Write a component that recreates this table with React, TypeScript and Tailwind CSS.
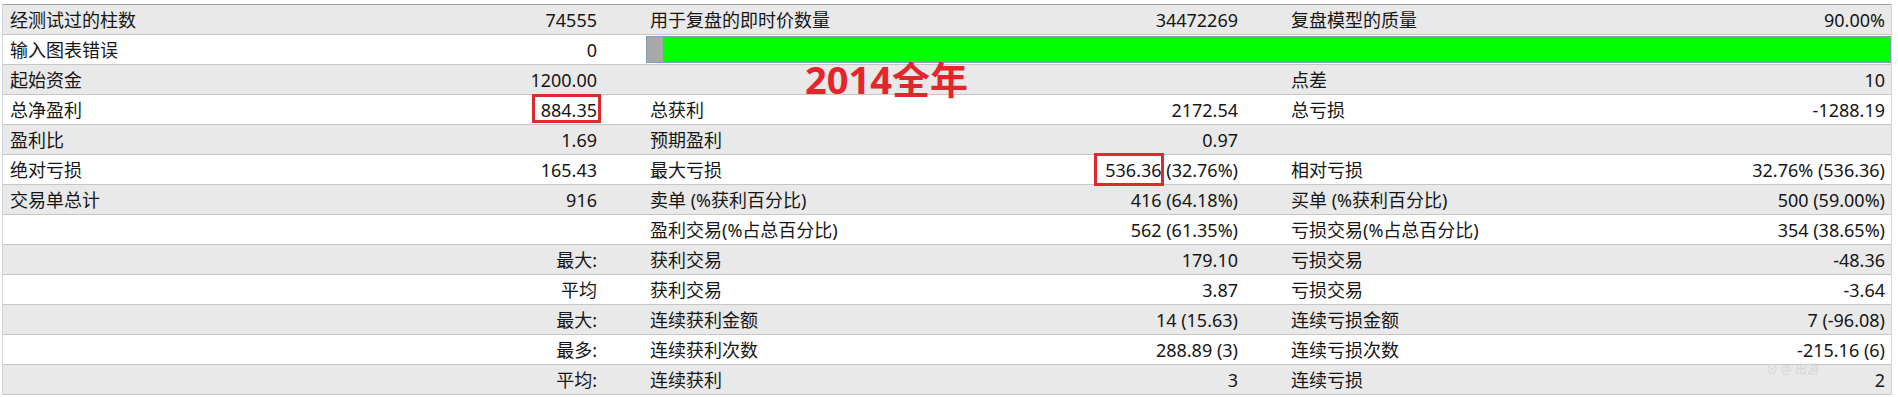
import React from 'react';

type Row = {
  a?: string;
  av?: string;
  b?: string;
  bv?: React.ReactNode;
  c?: string;
  cv?: string;
  bar?: boolean;
};

const rows: Row[] = [
  { a: '经测试过的柱数', av: '74555', b: '用于复盘的即时价数量', bv: '34472269', c: '复盘模型的质量', cv: '90.00%' },
  { a: '输入图表错误', av: '0', bar: true },
  { a: '起始资金', av: '1200.00', c: '点差', cv: '10' },
  { a: '总净盈利', av: '884.35', b: '总获利', bv: '2172.54', c: '总亏损', cv: '-1288.19' },
  { a: '盈利比', av: '1.69', b: '预期盈利', bv: '0.97' },
  { a: '绝对亏损', av: '165.43', b: '最大亏损', bv: '536.36 (32.76%)', c: '相对亏损', cv: '32.76% (536.36)' },
  { a: '交易单总计', av: '916', b: '卖单 (%获利百分比)', bv: '416 (64.18%)', c: '买单 (%获利百分比)', cv: '500 (59.00%)' },
  { b: '盈利交易(%占总百分比)', bv: '562 (61.35%)', c: '亏损交易(%占总百分比)', cv: '354 (38.65%)' },
  { av: '最大:', b: '获利交易', bv: '179.10', c: '亏损交易', cv: '-48.36' },
  { av: '平均', b: '获利交易', bv: '3.87', c: '亏损交易', cv: '-3.64' },
  { av: '最大:', b: '连续获利金额', bv: '14 (15.63)', c: '连续亏损金额', cv: '7 (-96.08)' },
  { av: '最多:', b: '连续获利次数', bv: '288.89 (3)', c: '连续亏损次数', cv: '-215.16 (6)' },
  { av: '平均:', b: '连续获利', bv: '3', c: '连续亏损', cv: '2' },
];

const Cell = ({ label, value, className }: { label?: string; value?: React.ReactNode; className: string }) => (
  <div className={`flex items-center justify-between whitespace-nowrap pt-[2px] ${className}`}>
    <span>{label}</span>
    <span>{value}</span>
  </div>
);

export default function App() {
  return (
    <div
      className="relative w-[1898px] h-[397px] overflow-hidden bg-white text-[18px] text-[#161616]"
      style={{ fontFamily: '"Noto Sans", "Noto Sans CJK SC", sans-serif' }}
    >
      <div className="ml-[2px] mt-[4px] w-[1890px] border-t border-l border-r border-t-[#a3a3a3] border-l-[#cfd6de] border-r-[#d4d4d4]">
        {rows.map((r, i) => (
          <div
            key={i}
            className={`flex h-[30px] border-b border-[#c6c6c6] ${i % 2 === 0 ? 'bg-[#e9e9e9]' : 'bg-white'}`}
          >
            <Cell label={r.a} value={r.av} className="w-[637px] pl-[7px] pr-[43px]" />
            {r.bar ? (
              <div className="flex-1 pl-[6px] pt-[1px]">
                <div className="flex h-[27px] border border-[#7f9db9]">
                  <div className="w-[16px] bg-[#a9a9a9]" />
                  <div className="flex-1 bg-[#00ff00]" />
                </div>
              </div>
            ) : (
              <>
                <Cell label={r.b} value={r.bv} className="w-[640px] pl-[10px] pr-[42px]" />
                <Cell label={r.c} value={r.cv} className="w-[611px] pl-[11px] pr-[6px]" />
              </>
            )}
          </div>
        ))}
      </div>

      {/* annotations drawn over the report */}
      <div className="absolute left-[805px] top-[60px] text-[38px] font-bold leading-none text-[#e3262c]">
        2014全年
      </div>
      <div className="absolute left-[532px] top-[94px] h-[29px] w-[69px] border-[3px] border-[#dc2a2e]" />
      <div className="absolute left-[1094px] top-[153px] h-[33px] w-[70px] border-[3px] border-[#dc2a2e]" />
      <div className="absolute left-[1766px] top-[364px] text-[12px] leading-none text-[#d6d6d6]">⊘ @ 出游</div>
    </div>
  );
}
